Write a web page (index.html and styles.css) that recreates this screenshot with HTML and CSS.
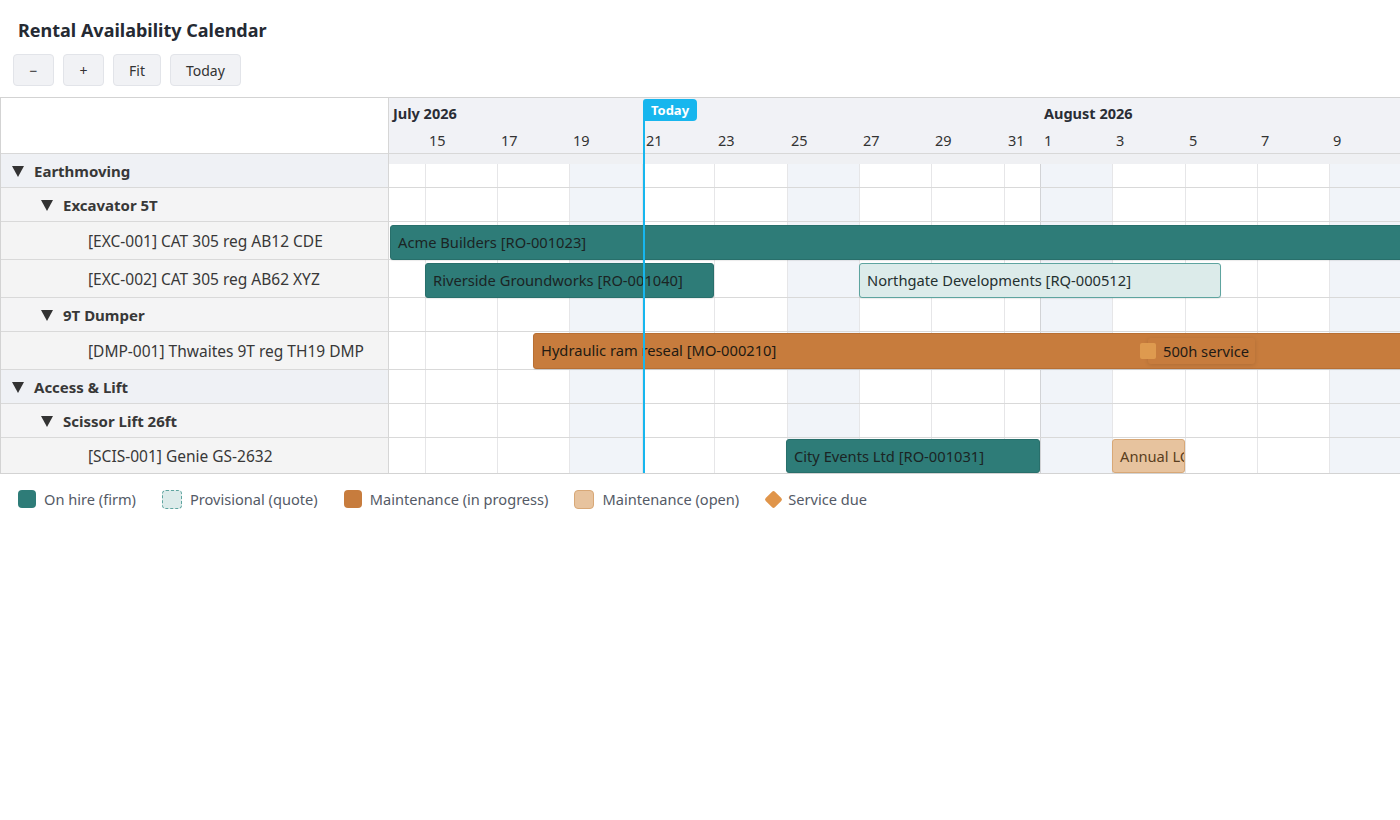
FILE: index.html
```html
<!DOCTYPE html>
<html lang="en">
<head>
<meta charset="utf-8">
<title>Rental Availability Calendar</title>
<link rel="stylesheet" href="styles.css">
</head>
<body>
<h1 class="title">Rental Availability Calendar</h1>
<div class="toolbar">
  <button class="btn">−</button>
  <button class="btn">+</button>
  <button class="btn">Fit</button>
  <button class="btn">Today</button>
</div>

<div class="gantt">
  <div class="left">
    <div class="lhead"></div>
    <div class="lrow group"><span class="caret"></span>Earthmoving</div>
    <div class="lrow sub"><span class="caret"></span>Excavator 5T</div>
    <div class="lrow item">[EXC-001] CAT 305 reg AB12 CDE</div>
    <div class="lrow item">[EXC-002] CAT 305 reg AB62 XYZ</div>
    <div class="lrow sub"><span class="caret"></span>9T Dumper</div>
    <div class="lrow item">[DMP-001] Thwaites 9T reg TH19 DMP</div>
    <div class="lrow group"><span class="caret"></span>Access &amp; Lift</div>
    <div class="lrow sub"><span class="caret"></span>Scissor Lift 26ft</div>
    <div class="lrow item">[SCIS-001] Genie GS-2632</div>
  </div>

  <div class="right">
    <div class="rhead">
      <span class="month" style="left:4px">July 2026</span>
      <span class="month" style="left:655px">August 2026</span>
      <span class="day" style="left:40px">15</span>
      <span class="day" style="left:112px">17</span>
      <span class="day" style="left:184px">19</span>
      <span class="day" style="left:257px">21</span>
      <span class="day" style="left:329px">23</span>
      <span class="day" style="left:402px">25</span>
      <span class="day" style="left:474px">27</span>
      <span class="day" style="left:546px">29</span>
      <span class="day" style="left:619px">31</span>
      <span class="day" style="left:655px">1</span>
      <span class="day" style="left:727px">3</span>
      <span class="day" style="left:800px">5</span>
      <span class="day" style="left:872px">7</span>
      <span class="day" style="left:944px">9</span>
      <span class="today-tab" style="left:254px">Today</span>
    </div>

    <div class="rbody">
      <div class="strip"></div>
      <div class="grid">
        <div class="shade" style="left:181px;width:72px"></div>
        <div class="shade" style="left:398px;width:72px"></div>
        <div class="shade" style="left:651px;width:72px"></div>
        <div class="shade" style="left:940px;width:72px"></div>
        <div class="vline" style="left:36px"></div>
        <div class="vline" style="left:108px"></div>
        <div class="vline" style="left:180px"></div>
        <div class="vline" style="left:253px"></div>
        <div class="vline" style="left:325px"></div>
        <div class="vline" style="left:398px"></div>
        <div class="vline" style="left:470px"></div>
        <div class="vline" style="left:542px"></div>
        <div class="vline" style="left:615px"></div>
        <div class="vline month-line" style="left:651px"></div>
        <div class="vline" style="left:723px"></div>
        <div class="vline" style="left:796px"></div>
        <div class="vline" style="left:868px"></div>
        <div class="vline" style="left:940px"></div>
      </div>

      <div class="rrow group"></div>
      <div class="rrow sub"></div>
      <div class="rrow item">
        <div class="bar firm" style="left:1px;width:1030px">Acme Builders [RO-001023]</div>
      </div>
      <div class="rrow item">
        <div class="bar firm" style="left:36px;width:289px">Riverside Groundworks [RO-001040]</div>
        <div class="bar prov" style="left:470px;width:362px">Northgate Developments [RQ-000512]</div>
      </div>
      <div class="rrow sub"></div>
      <div class="rrow item">
        <div class="bar maint" style="left:144px;width:900px">Hydraulic ram reseal [MO-000210]</div>
        <div class="milestone" style="left:751px"><span class="ms-icon"></span><span class="ms-label">500h service</span></div>
      </div>
      <div class="rrow group"></div>
      <div class="rrow sub"></div>
      <div class="rrow item">
        <div class="bar firm" style="left:397px;width:254px">City Events Ltd [RO-001031]</div>
        <div class="bar open" style="left:723px;width:73px" title="Annual LOLER">Annual LOLER</div>
      </div>
    </div>

    <div class="today-line" style="left:254px"></div>
  </div>
</div>

<div class="legend">
  <div class="lg"><span class="sw sw-firm"></span>On hire (firm)</div>
  <div class="lg"><span class="sw sw-prov"></span>Provisional (quote)</div>
  <div class="lg"><span class="sw sw-maint"></span>Maintenance (in progress)</div>
  <div class="lg"><span class="sw sw-open"></span>Maintenance (open)</div>
  <div class="lg"><span class="sw-diamond"></span>Service due</div>
</div>
</body>
</html>
```

FILE: styles.css
```css
* { box-sizing: border-box; }

body {
  margin: 0;
  font-family: "Noto Sans", "Open Sans", sans-serif;
  color: #222;
  background: #fff;
}

.title {
  margin: 0;
  padding: 18px 0 0 18px;
  font-size: 18px;
  line-height: 24px;
  font-weight: 700;
  color: #252a33;
}

.toolbar {
  display: flex;
  gap: 9px;
  padding: 12px 0 0 13px;
}

.btn {
  height: 32px;
  min-width: 41px;
  padding: 0 15px;
  border: 1px solid #e2e4e9;
  border-radius: 4px;
  background: #f1f2f5;
  font-family: "Noto Sans", sans-serif;
  font-size: 14px;
  line-height: 32px;
  color: #333;
}

.gantt {
  margin-top: 11px;
  width: 1400px;
  display: flex;
  border: 1px solid #d3d3d3;
  border-right: 0;
  overflow: hidden;
}

/* left panel */
.left {
  width: 388px;
  flex: none;
  border-right: 1px solid #d6d6d6;
}

.lhead {
  height: 56px;
  background: #fff;
  border-bottom: 1px solid #d8d8d8;
}

.lrow {
  display: flex;
  align-items: center;
  border-bottom: 1px solid #d9d9d9;
  color: #383838;
  font-size: 15.5px;
  white-space: nowrap;
}
.lrow:last-child { border-bottom: 0; }

.lrow.group {
  height: 34px;
  padding-left: 11px;
  background: #eff1f5;
  font-weight: 700;
  font-size: 15px;
}
.lrow.sub {
  height: 34px;
  padding-left: 40px;
  background: #f4f4f5;
  font-weight: 700;
  font-size: 15px;
}
.lrow.item {
  height: 38px;
  padding-left: 87px;
  background: #f4f4f4;
}
.lrow.item:last-child { height: 35px; }

.caret {
  width: 0;
  height: 0;
  border-left: 6.5px solid transparent;
  border-right: 6.5px solid transparent;
  border-top: 11px solid #333;
  margin-right: 10px;
  margin-top: 1px;
}

/* right panel */
.right {
  flex: 1;
  position: relative;
}

.rhead {
  position: relative;
  height: 56px;
  background: #f1f2f6;
  border-bottom: 1px solid #d8d8d8;
}

.month {
  position: absolute;
  top: 4px;
  font-size: 14.5px;
  font-weight: 700;
  color: #2a2d35;
  line-height: 22px;
}

.day {
  position: absolute;
  top: 31px;
  font-size: 14.5px;
  color: #333;
  line-height: 22px;
}

.today-tab {
  position: absolute;
  top: 1px;
  height: 22px;
  width: 54px;
  background: #17b6ee;
  color: #fff;
  font-size: 13px;
  font-weight: 700;
  line-height: 22px;
  text-align: center;
  border-radius: 3px 4px 4px 0;
  z-index: 6;
}

.today-line {
  position: absolute;
  top: 23px;
  bottom: 0;
  width: 2px;
  background: #17b6ee;
  z-index: 5;
}

.rbody {
  position: relative;
}

.strip {
  position: absolute;
  left: 0;
  right: 0;
  top: 0;
  height: 10px;
  background: #eff0f3;
  z-index: 1;
}

.grid {
  position: absolute;
  left: 0;
  right: 0;
  top: 10px;
  bottom: 0;
}

.shade {
  position: absolute;
  top: 0;
  bottom: 0;
  background: #f1f4f9;
}

.vline {
  position: absolute;
  top: 0;
  bottom: 0;
  width: 1px;
  background: #e6e6e8;
}
.vline.month-line { background: #d2d3d6; }

.rrow {
  position: relative;
  border-bottom: 1px solid #d9d9d9;
}
.rrow:last-child { border-bottom: 0; }
.rrow.group, .rrow.sub { height: 34px; }
.rrow.item { height: 38px; }
.rrow.item:last-child { height: 35px; }

.bar {
  position: absolute;
  top: 3px;
  height: 35px;
  padding-left: 7px;
  border-radius: 3px;
  font-size: 14.7px;
  line-height: 33px;
  white-space: nowrap;
  overflow: hidden;
  z-index: 2;
  box-shadow: 0 1px 1px rgba(0, 0, 0, 0.08);
}
.rrow:last-child .bar { height: 34px; top: 1px; }

.bar.firm {
  background: #2e7c78;
  border: 1px solid #286f6b;
  color: #1b2424;
}
.bar.prov {
  background: #dcebea;
  border: 1px solid #5ea49f;
  color: #243030;
}
.bar.maint {
  background: #c77c3d;
  border: 1px solid #b86f33;
  color: #221a12;
  top: 1px;
  height: 36px;
}
.bar.open {
  background: #e7c39e;
  border: 1px solid #d8a877;
  color: #5a3e20;
  text-overflow: clip;
}

.milestone {
  position: absolute;
  top: 6px;
  height: 26px;
  display: flex;
  align-items: center;
  z-index: 3;
}
.ms-icon {
  width: 16px;
  height: 16px;
  border-radius: 2px;
  background: #de9a4f;
  position: relative;
  z-index: 1;
}
.ms-label {
  margin-left: -8px;
  padding: 0 6px 0 15px;
  height: 26px;
  line-height: 26px;
  font-size: 14.7px;
  color: #1f1a15;
  border-radius: 3px;
  box-shadow: 0 1px 4px rgba(0, 0, 0, 0.12);
}

/* legend */
.legend {
  display: flex;
  gap: 26px;
  padding: 15px 0 0 18px;
  font-size: 14.6px;
  color: #545a66;
}
.lg {
  display: flex;
  align-items: center;
  height: 20px;
}
.sw {
  width: 18px;
  height: 18px;
  border-radius: 4px;
  margin-right: 8px;
}
.sw-firm { background: #2e7c78; }
.sw-prov { width: 20px; height: 19px; background: #dcebea; border: 1px dashed #5ea49f; }
.sw-maint { background: #c77c3d; }
.sw-open { width: 20px; height: 19px; background: #e7c39e; border: 1px solid #d8a877; }
.sw-diamond {
  width: 13px;
  height: 13px;
  margin: 0 8px 0 2px;
  background: #e0954a;
  border-radius: 2px;
  transform: rotate(45deg);
}
```
